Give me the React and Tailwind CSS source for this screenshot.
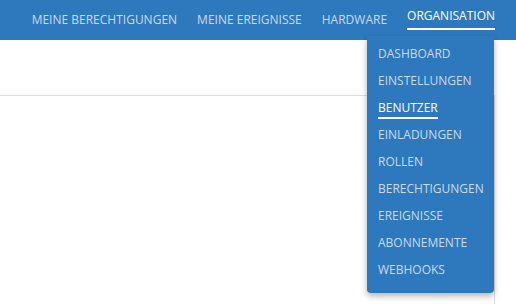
const navItems = ["MEINE BERECHTIGUNGEN", "MEINE EREIGNISSE", "HARDWARE"];

const menuItems = [
  "DASHBOARD",
  "EINSTELLUNGEN",
  "BENUTZER",
  "EINLADUNGEN",
  "ROLLEN",
  "BERECHTIGUNGEN",
  "EREIGNISSE",
  "ABONNEMENTE",
  "WEBHOOKS",
];

export default function App() {
  return (
    <div className="relative h-[304px] w-[516px] overflow-hidden bg-white font-['Open_Sans',sans-serif] text-[12px] font-medium">
      <header className="flex h-10 items-center justify-end gap-5 bg-[#2e78bd] pr-[21px]">
        {navItems.map((item) => (
          <a key={item} className="flex h-10 items-center text-[#c9dcf0]">
            {item}
          </a>
        ))}
        <div className="relative flex h-10 flex-col">
          <a className="flex h-[30px] items-end border-b-2 border-white pb-[3px] text-white">
            ORGANISATION
          </a>
          <div className="absolute right-[1px] top-9 w-[127px] rounded-b-[4px] bg-[#2e78bd] pb-[10px] pl-[11px] pt-[4px] shadow-[0_3px_6px_rgba(0,0,0,0.3)]">
            {menuItems.map((item) => (
              <div key={item} className="flex h-[27px] items-center">
                <span
                  className={
                    item === "BENUTZER"
                      ? "border-b-2 border-white pt-[3px] text-white"
                      : "text-[#c9dcf0]"
                  }
                >
                  {item}
                </span>
              </div>
            ))}
          </div>
        </div>
      </header>
      <div className="mt-[55px] h-[220px] w-[495px] border-r border-t border-[#dddddd]" />
    </div>
  );
}
